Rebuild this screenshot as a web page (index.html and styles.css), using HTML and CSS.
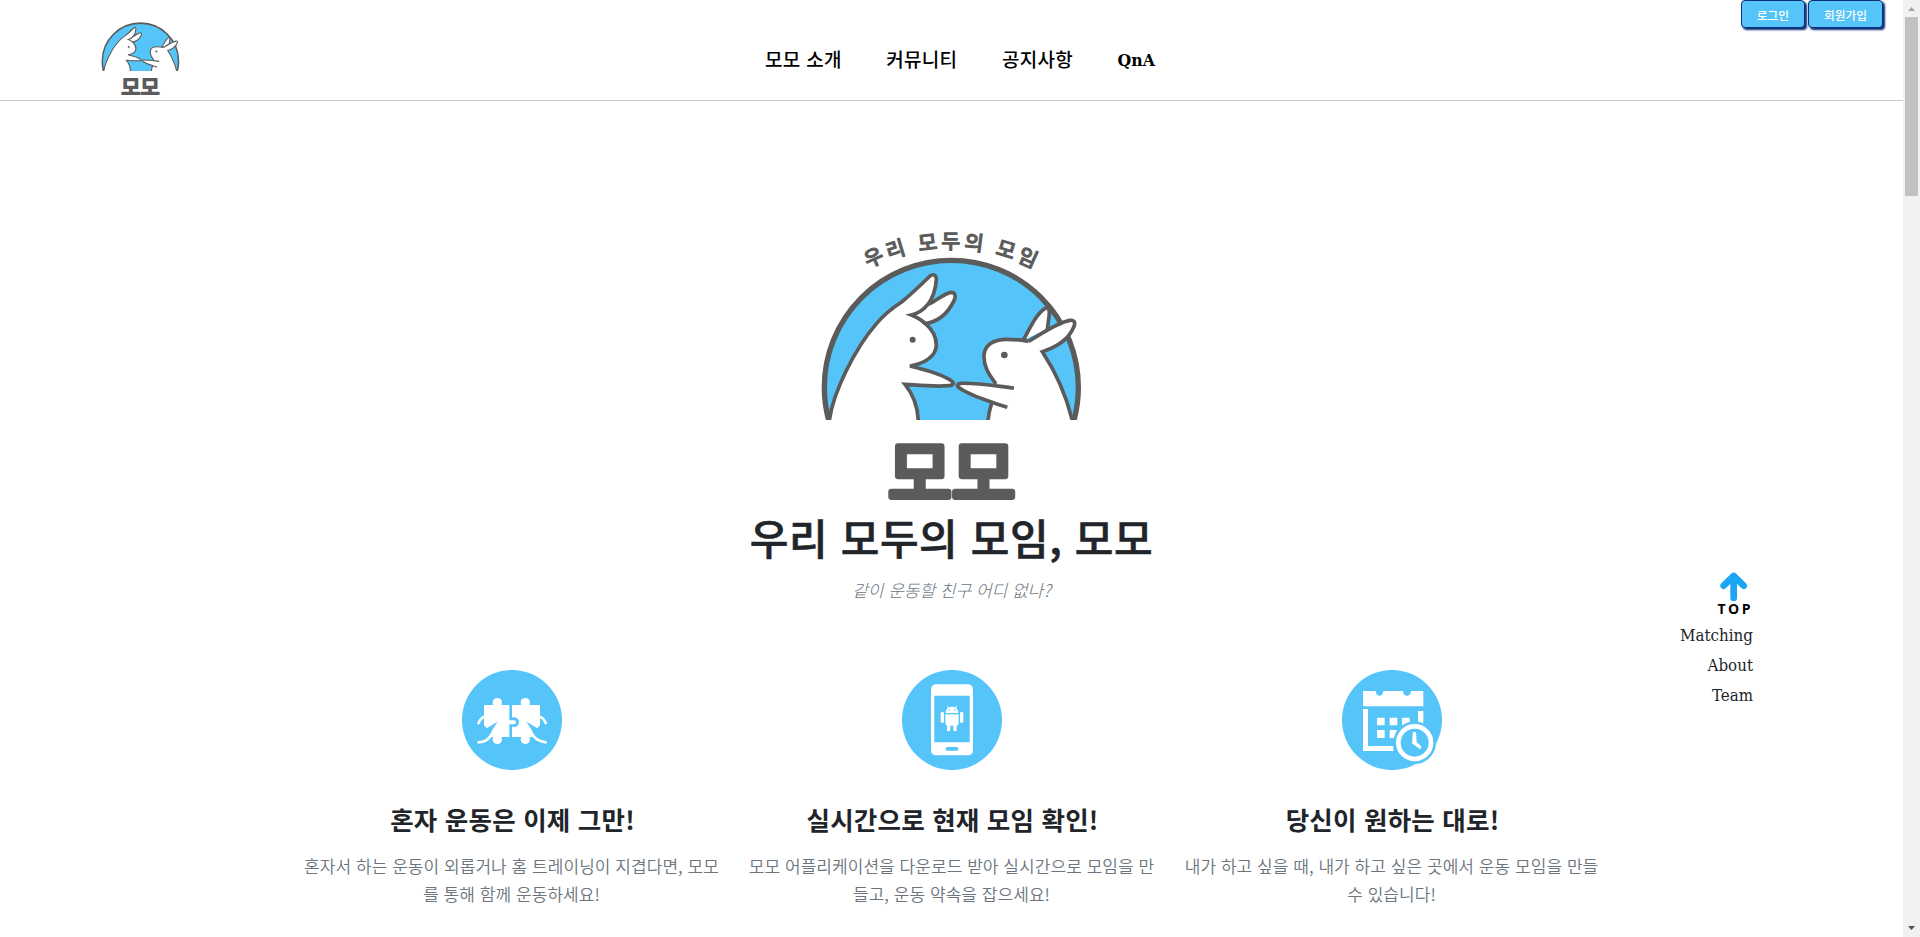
FILE: index.html
```html
<!DOCTYPE html>
<html lang="ko">
<head>
<meta charset="utf-8">
<title>모모</title>
<link rel="stylesheet" href="styles.css">
</head>
<body>
<svg class="defs" width="0" height="0">
  <defs>
    <clipPath id="ground"><rect x="0" y="0" width="840" height="600"/></clipPath>
    <symbol id="rabbits" viewBox="0 0 840 870">
      <g clip-path="url(#ground)" stroke="#5b5b5b" stroke-width="11">
        <circle cx="424" cy="502" r="381" fill="#55c4f8" stroke-width="16"/>
        <path fill="#fff" d="M57 610C66 520 135 385 200 310C228 277 250 262 275 246C305 222 335 192 360 168C370 160 379 166 379 178C377 208 368 235 353 254C380 243 402 219 424 217C436 217 438 230 432 242C414 280 385 305 346 311C370 331 379 350 379 375C379 408 345 430 300 438C345 449 404 466 426 484C434 491 428 496 417 497C375 501 330 496 285 493C307 520 325 560 325 610Z"/>
        <path fill="none" d="M353 254C340 270 325 280 304 285C322 292 335 300 346 311"/>
        <path fill="#fff" stroke="none" d="M558 492C536 462 521 440 522 408C523 375 550 358 590 358C622 358 632 360 655 364L697 395C740 460 773 540 789 610H533C535 588 539 568 545 549L600 540Z"/>
        <path fill="#fff" d="M640 360C661 322 683 275 708 264C718 261 719 275 717 290L712 328"/>
        <path fill="#fff" d="M655 364C690 345 738 309 779 301C794 299 797 308 791 322C775 360 738 382 697 395C740 460 773 540 789 610"/>
        <path fill="none" d="M655 364C632 360 622 358 590 358C550 358 523 375 522 408C521 440 536 462 558 492M545 549C539 568 535 588 533 610"/>
        <path fill="#fff" d="M612 504C570 500 505 488 452 490C438 492 440 499 450 505C485 530 545 546 592 562"/>
        <circle cx="308" cy="359" r="9" fill="#5b5b5b" stroke="none"/>
        <circle cx="583" cy="405" r="10" fill="#5b5b5b" stroke="none"/>
      </g>
      <text class="wordmark" x="425" y="836" text-anchor="middle">모모</text>
    </symbol>
  </defs>
</svg>
<div class="page">
  <div class="content">
    <header class="header">
      <a class="brand"><svg width="84" height="87"><use href="#rabbits"/></svg></a>
      <nav class="nav"><a>모모 소개</a><a>커뮤니티</a><a>공지사항</a><a class="slab">QnA</a></nav>
      <div class="account"><button>로그인</button><button>회원가입</button></div>
    </header>
    <main class="main">
      <svg class="hero-logo" width="280" height="290" viewBox="0 0 840 870">
        <path id="arc" d="M174 145A547 547 0 0 1 686 155" fill="none"/>
        <use href="#rabbits"/>
        <text class="slogan"><textPath href="#arc" textLength="515">우리 모두의 모임</textPath></text>
      </svg>
      <h2 class="title">우리 모두의 모임, 모모</h2>
      <p class="subtitle">같이 운동할 친구 어디 없나?</p>
      <section class="features">
        <article class="feature">
          <svg width="100" height="100" viewBox="36 30 300 300">
            <circle cx="186" cy="180" r="150" fill="#55c4f8"/>
            <g fill="#fff">
              <path d="M102 135H178V231H118L127 210L143 185L110 205L102 195Z"/>
              <path d="M186 135H270V195L262 205L229 185L245 210L254 231H186Z"/>
              <circle cx="142" cy="128" r="14"/><circle cx="226" cy="128" r="14"/>
              <circle cx="142" cy="238" r="14"/><circle cx="226" cy="238" r="14"/>
            </g>
            <circle cx="192" cy="187" r="15" fill="#55c4f8"/>
            <path d="M176 187H192" stroke="#fff" stroke-width="12" stroke-linecap="round"/>
            <g fill="none" stroke="#fff" stroke-width="8" stroke-linecap="round" stroke-linejoin="round">
              <path d="M103 170C92 173 89 181 86 189M269 170C280 173 284 181 287 189M86 247C112 244 116 236 126 222L143 194M287 247C262 243 256 236 246 222L229 194"/>
            </g>
          </svg>
          <h4>혼자 운동은 이제 그만!</h4>
          <p>혼자서 하는 운동이 외롭거나 홈 트레이닝이 지겹다면, 모모<br>를 통해 함께 운동하세요!</p>
        </article>
        <article class="feature">
          <svg width="100" height="100" viewBox="36 30 300 300">
            <circle cx="186" cy="180" r="150" fill="#55c4f8"/>
            <rect x="123" y="73" width="126" height="213" rx="14" fill="#fff"/>
            <path d="M133 107H239V247H133Z" fill="#55c4f8"/>
            <rect x="167" y="261" width="38" height="11" rx="5" fill="#55c4f8"/>
            <g fill="#fff">
              <path d="M167 159C167 134 205 134 205 159ZM166 163H206V190Q206 197 199 197H173Q166 197 166 190Z"/>
              <rect x="152" y="155" width="10" height="34" rx="5"/><rect x="210" y="155" width="10" height="34" rx="5"/>
              <rect x="171" y="190" width="10" height="24" rx="4"/><rect x="190" y="190" width="10" height="24" rx="4"/>
            </g>
            <path d="M172 138L177 147M200 138L195 147" stroke="#fff" stroke-width="3"/>
            <circle cx="178" cy="150" r="2" fill="#55c4f8"/><circle cx="194" cy="150" r="2" fill="#55c4f8"/>
          </svg>
          <h4>실시간으로 현재 모임 확인!</h4>
          <p>모모 어플리케이션을 다운로드 받아 실시간으로 모임을 만<br>들고, 운동 약속을 잡으세요!</p>
        </article>
        <article class="feature">
          <svg width="100" height="100" viewBox="36 30 300 300">
            <circle cx="186" cy="180" r="150" fill="#55c4f8"/>
            <g fill="#fff">
              <path d="M99 93H137C137 112 160 112 160 93H219C219 112 243 112 243 93H280V139H99Z"/>
              <path d="M99 147H114V258H190V273H99ZM264 153H280V200H264Z"/>
              <path d="M141 173H164V196H141ZM179 173H202V196H179ZM216 173H239V196H216ZM141 210H164V234H141ZM179 210H202V234H179Z"/>
            </g>
            <circle cx="254" cy="248" r="64" fill="#55c4f8"/>
            <circle cx="254" cy="248" r="49" fill="none" stroke="#fff" stroke-width="14"/>
            <path d="M249 216H258L260 246L275 260L270 268L246 250Z" fill="#fff"/>
          </svg>
          <h4>당신이 원하는 대로!</h4>
          <p>내가 하고 싶을 때, 내가 하고 싶은 곳에서 운동 모임을 만들<br>수 있습니다!</p>
        </article>
      </section>
    </main>
    <aside class="quick">
      <a class="top">
        <svg width="28" height="30" viewBox="0 0 84 90"><path d="M41 81V15M11 44L41 15L71 44" fill="none" stroke="#1ba5f5" stroke-width="20" stroke-linecap="round" stroke-linejoin="round"/></svg>
        <span>TOP</span>
      </a>
      <a>Matching</a><a>About</a><a>Team</a>
    </aside>
  </div>
  <div class="scrollbar">
    <svg width="17" height="17"><path d="M5 11L8.500 7L12 11Z" fill="#a3a3a3"/></svg>
    <div class="thumb"></div>
    <svg class="down" width="17" height="17"><path d="M5 6L8.500 10L12 6Z" fill="#505050"/></svg>
  </div>
</div>
</body>
</html>
```
FILE: styles.css
```css
* { box-sizing: border-box; }
body { margin: 0; background: #fff; color: #212529; font-family: "Noto Sans CJK KR", sans-serif; }
.defs { position: absolute; }
.page { display: flex; height: 937px; overflow: hidden; }
.content { position: relative; width: 1903px; }
.header { position: relative; height: 101px; border-bottom: 1px solid #c9c9c9; display: flex; }
.brand { margin: 11px 0 0 98px; width: 84px; height: 87px; }
.brand svg { display: block; }
.nav { display: flex; margin-left: 583px; padding-top: 45px; gap: 44.500px; font-size: 19px; line-height: 28px; font-weight: 500; letter-spacing: .3px; color: #000; white-space: nowrap; }
.slab { font-family: "DejaVu Serif", serif; font-stretch: condensed; font-weight: 700; font-size: 17.500px; letter-spacing: 0; padding-top: 1px; }
.account { position: absolute; right: 20px; top: 0; display: flex; gap: 3px; }
.account button { height: 28px; padding: 1px 15px 0; border: 1px solid #0a2f7a; border-radius: 4px; background: #55c4f8; color: #fff; font: 500 11.700px/25px "Noto Sans CJK KR", sans-serif; box-shadow: 2px 2px 2px #0a2f7a; white-space: nowrap; }
.main { display: flex; flex-direction: column; align-items: center; padding-top: 119px; }
.hero-logo { display: block; margin-right: 3px; overflow: visible; }
.wordmark { font-family: "Noto Sans CJK KR", sans-serif; font-weight: 400; font-size: 208px; fill: #5b5b5b; stroke: #5b5b5b; stroke-width: 19px; stroke-linejoin: round; }
.slogan { font-family: "Noto Sans CJK KR", sans-serif; font-weight: 500; font-size: 62px; fill: #5b5b5b; stroke: #5b5b5b; stroke-width: 3px; stroke-linejoin: round; }
.title { margin: 0; font-size: 42px; line-height: 54px; font-weight: 500; letter-spacing: .6px; -webkit-text-stroke: .6px #212529; }
.subtitle { margin: 12px 0 0; font-size: 17px; line-height: 28px; font-style: italic; font-weight: 300; color: #6c757d; }
.features { display: grid; grid-template-columns: repeat(3, 440px); margin-top: 66px; }
.feature { display: flex; flex-direction: column; align-items: center; text-align: center; white-space: nowrap; }
.feature h4 { margin: 34px 0 0; padding-left: 2px; font-size: 25.500px; line-height: 30px; font-weight: 700; letter-spacing: .2px; }
.feature p { margin: 18px 0 0; font-size: 17px; line-height: 28px; font-weight: 350; letter-spacing: .05px; color: #6c757d; }
.quick { position: absolute; right: 150px; top: 570px; display: flex; flex-direction: column; align-items: flex-end; font: 16.800px/30px "DejaVu Serif", serif; font-stretch: condensed; color: #212529; }
.top { display: flex; flex-direction: column; align-items: center; height: 50px; padding: 1px 3px 0 0; font: 700 14px/14px "Open Sans", sans-serif; letter-spacing: 2.500px; color: #000; }
.top span { margin-right: -3px; margin-top: 1px; }
.scrollbar { width: 17px; background: #f1f1f1; display: flex; flex-direction: column; align-items: center; }
.thumb { width: 13px; height: 179px; background: #c1c1c1; }
.down { margin-top: auto; }
```
